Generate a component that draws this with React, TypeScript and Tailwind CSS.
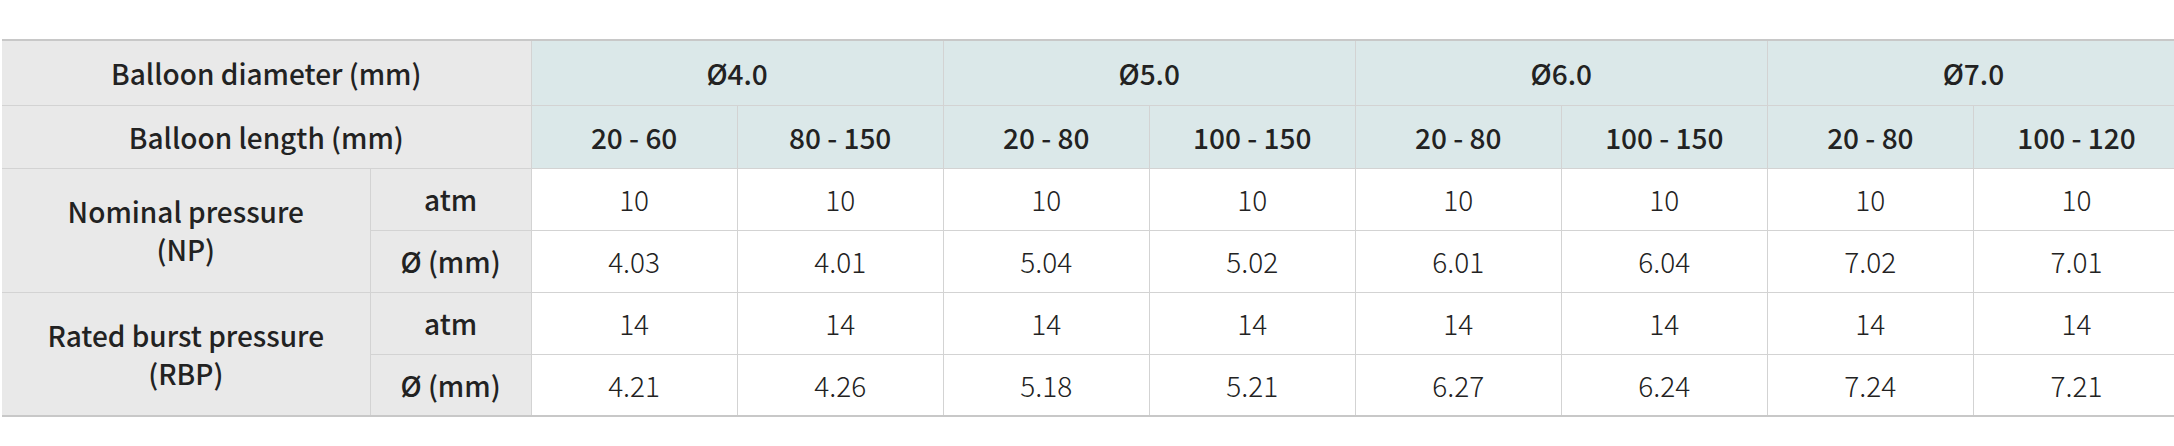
import React from 'react';

const font = { fontFamily: '"Noto Sans CJK KR", "Noto Sans", sans-serif' };

const groups = [
  { label: 'Ø4.0', lengths: ['20 - 60', '80 - 150'] },
  { label: 'Ø5.0', lengths: ['20 - 80', '100 - 150'] },
  { label: 'Ø6.0', lengths: ['20 - 80', '100 - 150'] },
  { label: 'Ø7.0', lengths: ['20 - 80', '100 - 120'] },
];

const rows = [
  { title: 'Nominal pressure', abbr: '(NP)', atm: '10', dia: ['4.03', '4.01', '5.04', '5.02', '6.01', '6.04', '7.02', '7.01'] },
  { title: 'Rated burst pressure', abbr: '(RBP)', atm: '14', dia: ['4.21', '4.26', '5.18', '5.21', '6.27', '6.24', '7.24', '7.21'] },
];

const head = 'border border-[#d3d3d3] text-center align-middle font-medium text-[#222]';
const cell = 'border border-[#d3d3d3] text-center align-middle font-light text-[#222] bg-white';

export default function App() {
  return (
    <div className="w-full overflow-hidden bg-white pt-[39px] pl-[2px] pb-[28px]" style={font}>
      <table className="table-fixed border-collapse w-[2178px] text-[28px] leading-[38px] border-t-2 border-b-2 border-t-[#c8c8c8] border-b-[#c8c8c8]">
        <colgroup>
          <col className="w-[368px]" />
          <col className="w-[161px]" />
          {Array.from({ length: 8 }).map((_, i) => (
            <col key={i} className="w-[206px]" />
          ))}
        </colgroup>
        <thead>
          <tr className="h-[65px]">
            <th colSpan={2} className={`${head} bg-[#e9e9e9] border-l-0`}>Balloon diameter (mm)</th>
            {groups.map((g) => (
              <th key={g.label} colSpan={2} className={`${head} bg-[#dbe8e9]`}>{g.label}</th>
            ))}
          </tr>
          <tr className="h-[63px]">
            <th colSpan={2} className={`${head} bg-[#e9e9e9] border-l-0`}>Balloon length (mm)</th>
            {groups.map((g) =>
              g.lengths.map((l, i) => (
                <th key={g.label + i} className={`${head} bg-[#dbe8e9]`}>{l}</th>
              ))
            )}
          </tr>
        </thead>
        <tbody>
          {rows.map((r) => (
            <React.Fragment key={r.title}>
              <tr className="h-[62px]">
                <th rowSpan={2} className={`${head} bg-[#e9e9e9] border-l-0`}>
                  {r.title}
                  <br />
                  {r.abbr}
                </th>
                <th className={`${head} bg-[#e9e9e9]`}>atm</th>
                {r.dia.map((_, i) => (
                  <td key={i} className={cell}>{r.atm}</td>
                ))}
              </tr>
              <tr className="h-[62px]">
                <th className={`${head} bg-[#e9e9e9]`}>Ø (mm)</th>
                {r.dia.map((d, i) => (
                  <td key={i} className={cell}>{d}</td>
                ))}
              </tr>
            </React.Fragment>
          ))}
        </tbody>
      </table>
    </div>
  );
}
